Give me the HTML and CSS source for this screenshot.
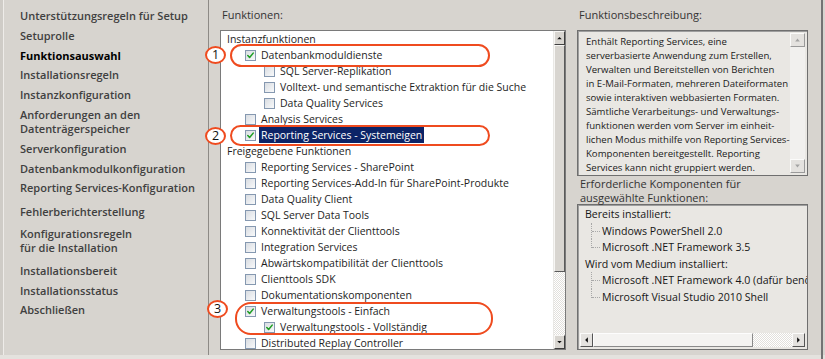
FILE: index.html
```html
<!DOCTYPE html>
<html lang="de">
<head>
<meta charset="utf-8">
<title>Funktionsauswahl</title>
<link rel="stylesheet" href="styles.css">
</head>
<body>
<div class="window">
  <nav class="sidebar">
    <div class="step">Unterstützungsregeln für Setup</div>
    <div class="step">Setuprolle</div>
    <div class="step current">Funktionsauswahl</div>
    <div class="step">Installationsregeln</div>
    <div class="step">Instanzkonfiguration</div>
    <div class="step">Anforderungen an den<br>Datenträgerspeicher</div>
    <div class="step">Serverkonfiguration</div>
    <div class="step">Datenbankmodulkonfiguration</div>
    <div class="step">Reporting Services-Konfiguration</div>
    <div class="step gap-before">Fehlerberichterstellung</div>
    <div class="step wide">Konfigurationsregeln<br>für die Installation</div>
    <div class="step wide">Installationsbereit</div>
    <div class="step">Installationsstatus</div>
    <div class="step">Abschließen</div>
  </nav>

  <main class="content">
    <section class="features">
      <div class="label">Funktionen:</div>
      <div class="listbox">
        <ul class="tree">
          <li class="row group">Instanzfunktionen</li>
          <li class="row l1"><span class="cb on"><svg viewBox="0 0 11 11"><path d="M2.2 5.6 L4.4 8 L8.8 2.6"/></svg></span><span class="txt">Datenbankmoduldienste</span></li>
          <li class="row l2"><span class="cb"></span><span class="txt">SQL Server-Replikation</span></li>
          <li class="row l2"><span class="cb"></span><span class="txt">Volltext- und semantische Extraktion für die Suche</span></li>
          <li class="row l2"><span class="cb"></span><span class="txt">Data Quality Services</span></li>
          <li class="row l1"><span class="cb"></span><span class="txt">Analysis Services</span></li>
          <li class="row l1"><span class="cb on"><svg viewBox="0 0 11 11"><path d="M2.2 5.6 L4.4 8 L8.8 2.6"/></svg></span><span class="txt selected">Reporting Services - Systemeigen</span></li>
          <li class="row group">Freigegebene Funktionen</li>
          <li class="row l1"><span class="cb"></span><span class="txt">Reporting Services - SharePoint</span></li>
          <li class="row l1"><span class="cb"></span><span class="txt">Reporting Services-Add-In für SharePoint-Produkte</span></li>
          <li class="row l1"><span class="cb"></span><span class="txt">Data Quality Client</span></li>
          <li class="row l1"><span class="cb"></span><span class="txt">SQL Server Data Tools</span></li>
          <li class="row l1"><span class="cb"></span><span class="txt">Konnektivität der Clienttools</span></li>
          <li class="row l1"><span class="cb"></span><span class="txt">Integration Services</span></li>
          <li class="row l1"><span class="cb"></span><span class="txt">Abwärtskompatibilität der Clienttools</span></li>
          <li class="row l1"><span class="cb"></span><span class="txt">Clienttools SDK</span></li>
          <li class="row l1"><span class="cb"></span><span class="txt">Dokumentationskomponenten</span></li>
          <li class="row l1"><span class="cb on"><svg viewBox="0 0 11 11"><path d="M2.2 5.6 L4.4 8 L8.8 2.6"/></svg></span><span class="txt">Verwaltungstools - Einfach</span></li>
          <li class="row l2"><span class="cb on"><svg viewBox="0 0 11 11"><path d="M2.2 5.6 L4.4 8 L8.8 2.6"/></svg></span><span class="txt">Verwaltungstools - Vollständig</span></li>
          <li class="row l1"><span class="cb"></span><span class="txt">Distributed Replay Controller</span></li>
        </ul>
        <div class="vscroll">
          <div class="sbtn"><svg viewBox="0 0 12 12"><path d="M3 7.5 L6 4.5 L9 7.5 Z"/></svg></div>
          <div class="thumb"></div>
          <div class="track"></div>
          <div class="sbtn"><svg viewBox="0 0 12 12"><path d="M3 4.5 L6 7.5 L9 4.5 Z"/></svg></div>
        </div>
      </div>
    </section>

    <section class="details">
      <div class="label">Funktionsbeschreibung:</div>
      <div class="box descbox">
        <div class="desc">
          <div>Enthält Reporting Services, eine</div>
          <div>serverbasierte Anwendung zum Erstellen,</div>
          <div>Verwalten und Bereitstellen von Berichten</div>
          <div>in E-Mail-Formaten, mehreren Dateiformaten</div>
          <div>sowie interaktiven webbasierten Formaten.</div>
          <div>Sämtliche Verarbeitungs- und Verwaltungs-</div>
          <div>funktionen werden vom Server im einheit-</div>
          <div>lichen Modus mithilfe von Reporting Services-</div>
          <div>Komponenten bereitgestellt. Reporting</div>
          <div>Services kann nicht gruppiert werden.</div>
        </div>
        <div class="mscroll">
          <div class="mbtn"><svg viewBox="0 0 13 13"><path d="M4 8 L6.5 5 L9 8 Z"/></svg></div>
          <div class="mtrack"></div>
          <div class="mbtn"><svg viewBox="0 0 13 13"><path d="M4 5 L6.5 8 L9 5 Z"/></svg></div>
        </div>
      </div>
      <div class="label two">Erforderliche Komponenten für<br>ausgewählte Funktionen:</div>
      <div class="box compbox">
        <div class="comptree">
          <div class="node">Bereits installiert:</div>
          <div class="children">
            <div class="leaf">Windows PowerShell 2.0</div>
            <div class="leaf last">Microsoft .NET Framework 3.5</div>
          </div>
          <div class="node">Wird vom Medium installiert:</div>
          <div class="children">
            <div class="leaf">Microsoft .NET Framework 4.0 (dafür benötigte Komponenten)</div>
            <div class="leaf last">Microsoft Visual Studio 2010 Shell</div>
          </div>
        </div>
        <div class="hscroll">
          <div class="hbtn"><svg viewBox="0 0 12 12"><path d="M7.5 3 L4.5 6 L7.5 9 Z"/></svg></div>
          <div class="hthumb"></div>
          <div class="htrack"></div>
          <div class="hbtn"><svg viewBox="0 0 12 12"><path d="M4.5 3 L7.5 6 L4.5 9 Z"/></svg></div>
        </div>
      </div>
    </section>
  </main>
  <div class="edge"></div>

  <div class="callout c1">1</div>
  <div class="callout c2">2</div>
  <div class="callout c3">3</div>
  <div class="ring r1"></div>
  <div class="ring r2"></div>
  <div class="ring r3"></div>
</div>
</body>
</html>
```

FILE: styles.css
```css
* { box-sizing: border-box; }
html, body { margin: 0; padding: 0; }
body {
  background: #e6e4e0;
  font-family: "Open Sans", "Noto Sans", sans-serif;
  color: #222;
}
.window {
  position: relative;
  width: 825px;
  height: 359px;
  display: flex;
  background: #d7d4cf;
  border-bottom: 4px solid #e4e2de;
}

/* Sidebar */
.sidebar {
  width: 209px;
  flex: none;
  border-left: 3px solid #cfccc7;
  box-shadow: inset 1px 0 0 #eeece9;
  border-right: 1px solid #8d8a86;
  padding: 9px 0 0 17px;
  display: flex;
  flex-direction: column;
  gap: 5.8px;
  font-size: 11px;
  font-weight: 600;
  line-height: 14px;
  color: #404040;
  white-space: nowrap;
}
.step.current { color: #000; font-weight: 700; }
.step.gap-before { margin-top: 4px; }
.step.wide { margin-top: 2.5px; }

/* Main content */
.content {
  flex: none;
  display: flex;
  gap: 11px;
  padding-left: 11px;
}
.label {
  font-size: 11px;
  line-height: 16px;
  height: 30px;
  padding: 7px 0 0 2px;
  color: #333;
  white-space: nowrap;
}
.label.two {
  height: 28px;
  padding: 1px 0 0 3px;
  line-height: 13.5px;
}

.features { width: 346px; }
.listbox {
  height: 320px;
  display: flex;
  border: 1px solid #7a7a7a;
  background: #fff;
  overflow: hidden;
}
.tree {
  list-style: none;
  margin: 0;
  padding: 0;
  flex: 1;
  font-size: 10.5px;
  color: #1e1e1e;
  overflow: hidden;
}
.row {
  height: 16px;
  line-height: 16px;
  display: flex;
  align-items: center;
  white-space: nowrap;
}
.row.group { padding-left: 6px; }
.row.l1 { padding-left: 24px; }
.row.l2 { padding-left: 43px; }
.cb {
  width: 11px;
  height: 11px;
  flex: none;
  border: 1px solid #8598b0;
  background: linear-gradient(135deg, #d9dde2, #f8f9fa);
  margin-right: 3px;
  display: flex;
}
.cb svg { width: 100%; height: 100%; }
.cb path { fill: none; stroke: #1e9e24; stroke-width: 1.9; stroke-linecap: round; stroke-linejoin: round; }
.txt { padding: 0 2px; line-height: 16px; }
.txt.selected { background: #0c2467; color: #fff; }

.vscroll {
  width: 12px;
  flex: none;
  display: flex;
  flex-direction: column;
  border-left: 1px solid #e9e8e5;
}
.sbtn {
  height: 14px;
  flex: none;
  background: #d8d5d0;
  border: 1px solid;
  border-color: #f7f6f4 #3f3f3f #3f3f3f #f7f6f4;
}
.sbtn svg { width: 100%; height: 100%; display: block; }
.sbtn path { fill: #111; }
.thumb {
  height: 227px;
  flex: none;
  background: #d8d5d0;
  border: 1px solid;
  border-color: #f7f6f4 #5a5a5a #5a5a5a #f7f6f4;
}
.track {
  flex: 1;
  background: repeating-conic-gradient(#ffffff 0 25%, #e2e0dc 0 50%) 0 0 / 2px 2px;
}

.details { width: 231px; }
.box {
  border: 1px solid #6f6f6f;
  box-shadow: inset 1px 1px 0 #9e9e9e;
  background: #e9e7e3;
  display: flex;
  overflow: hidden;
}
.descbox { height: 146px; }
.desc {
  flex: 1;
  padding: 4px 0 0 8px;
  font-size: 9.6px;
  line-height: 14px;
  color: #1a1a1a;
  white-space: nowrap;
  overflow: hidden;
}
.mscroll {
  width: 15px;
  flex: none;
  margin: 2px 2px 2px 0;
  display: flex;
  flex-direction: column;
  background: #f1f0ee;
}
.mbtn {
  height: 14px;
  background: #e4e2df;
  border: 1px solid;
  border-color: #fbfbfa #9a9a9a #9a9a9a #fbfbfa;
}
.mbtn svg { width: 100%; height: 100%; display: block; }
.mbtn path { fill: #a3a3a3; }
.mtrack { flex: 1; }

.compbox {
  height: 146px;
  flex-direction: column;
}
.comptree {
  flex: 1;
  padding: 1px 0 0 7px;
  font-size: 10.6px;
  line-height: 16.5px;
  color: #161616;
  white-space: nowrap;
  overflow: hidden;
}
.children { margin-left: 6px; }
.leaf {
  position: relative;
  padding-left: 10px;
  border-left: 1px dotted #a8a8a8;
}
.leaf.last { border-left-color: transparent; }
.leaf.last::after {
  content: "";
  position: absolute;
  left: -1px;
  top: 0;
  height: 9px;
  border-left: 1px dotted #a8a8a8;
}
.leaf::before {
  content: "";
  position: absolute;
  left: 0;
  top: 8px;
  width: 8px;
  border-top: 1px dotted #a8a8a8;
}
.hscroll {
  height: 14px;
  flex: none;
  margin: 0 2px 2px 2px;
  display: flex;
  background: #f1f0ee;
}
.hbtn {
  width: 13px;
  flex: none;
  background: #e4e2df;
  border: 1px solid;
  border-color: #fbfbfa #555 #555 #fbfbfa;
}
.hbtn svg { width: 100%; height: 100%; display: block; }
.hbtn path { fill: #111; }
.hthumb {
  width: 160px;
  flex: none;
  background: #f4f3f1;
  border: 1px solid;
  border-color: #fdfdfd #8a8a8a #8a8a8a #fdfdfd;
}
.htrack {
  flex: 1;
  background: repeating-conic-gradient(#ffffff 0 25%, #e2e0dc 0 50%) 0 0 / 2px 2px;
}

.edge {
  position: absolute;
  top: 0;
  bottom: -4px;
  left: 821px;
  width: 2px;
  background: #737373;
}

/* Annotations overlaying the list */
.callout {
  position: absolute;
  width: 21px;
  height: 18px;
  border: 2px solid #ef4b1f;
  border-radius: 50%;
  background: #fff;
  font-size: 12.5px;
  line-height: 14px;
  text-align: center;
  color: #111;
}
.c1 { left: 205px; top: 46px; }
.c2 { left: 205px; top: 127px; }
.c3 { left: 207px; top: 300px; }
.ring {
  position: absolute;
  border: 2px solid #ef4b1f;
  border-radius: 14px;
}
.r1 { left: 230px; top: 44px; width: 260px; height: 23px; }
.r2 { left: 230px; top: 125px; width: 260px; height: 21px; }
.r3 { left: 235px; top: 302px; width: 258px; height: 33px; border-radius: 16px; }
```
